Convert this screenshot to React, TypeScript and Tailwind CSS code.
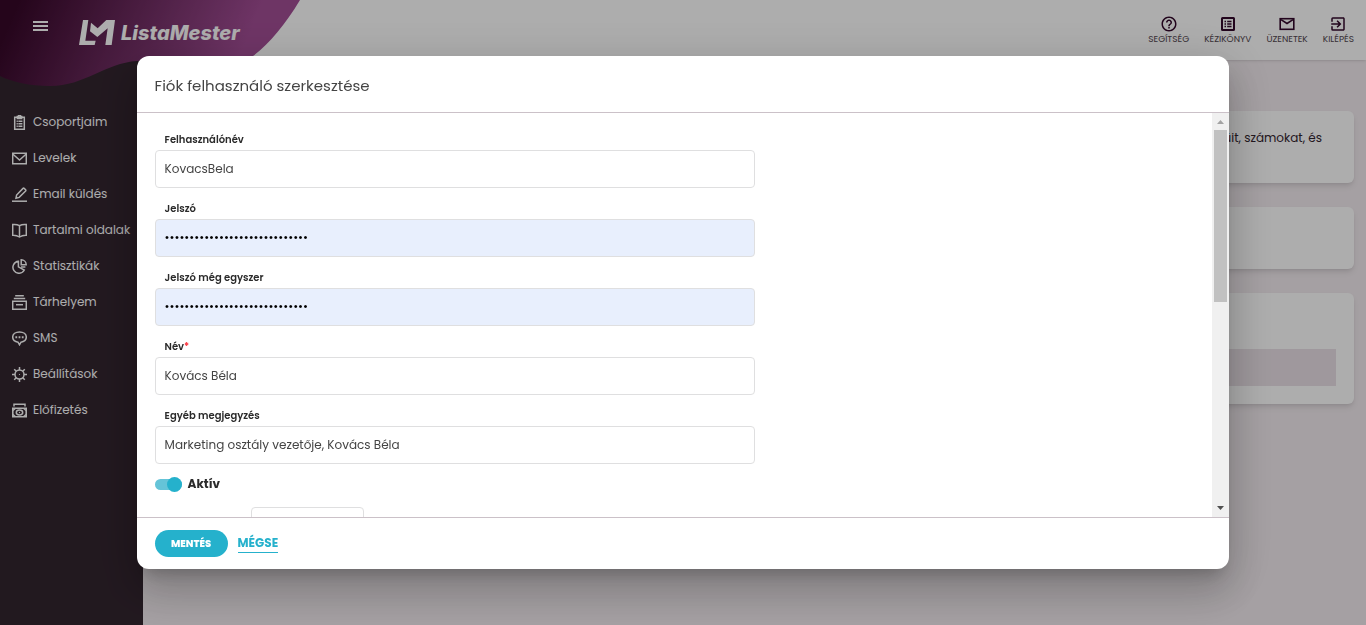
import { useState } from "react";
import type { ReactNode } from "react";
import { MdHelpOutline, MdOutlineExitToApp } from "react-icons/md";

export default function App() {
  return (
    <div className="relative flex min-h-screen flex-col bg-[#f3ecf0] font-['Poppins','Inter',sans-serif] text-[12px] text-[#33252f]">
      <Header />
      <div className="flex flex-1">
        <Sidebar />
        <PageCards />
      </div>
      <div className="fixed inset-0 z-20 flex items-center justify-center bg-black/32">
        <EditUserDialog />
      </div>
    </div>
  );
}

function HandbookIcon() {
  return (
    <svg width="18" height="18" viewBox="0 0 18 18" fill="none" stroke="currentColor" aria-hidden="true">
      <rect x="3" y="3" width="12" height="12" rx=".5" strokeWidth="2" />
      <path d="M5.500 6.500H7M5.500 9H7M5.500 11.500H7M8.200 6.500H12.500M8.200 9H12.500M8.200 11.500H12.500" strokeWidth="1.500" />
    </svg>
  );
}

function MessageIcon() {
  return (
    <svg width="18" height="18" viewBox="0 0 18 18" fill="none" stroke="currentColor" aria-hidden="true">
      <rect x="2.200" y="3.700" width="13.600" height="10.600" strokeWidth="1.600" />
      <path d="M3 4.600L9 8.500L15 4.600" strokeWidth="1.500" />
    </svg>
  );
}

const topLinks = [
  { label: "SEGÍTSÉG", icon: <MdHelpOutline size={18} /> },
  { label: "KÉZIKÖNYV", icon: <HandbookIcon /> },
  { label: "ÜZENETEK", icon: <MessageIcon /> },
  { label: "KILÉPÉS", icon: <MdOutlineExitToApp size={18} /> },
];

function Header() {
  return (
    <header className="relative z-10 flex h-[60px] items-center justify-between bg-white pr-3 shadow">
      {/* Purple wave behind the logo */}
      <svg className="absolute top-0 left-0" width="300" height="87" viewBox="0 0 300 87" aria-hidden="true">
        <defs>
          <linearGradient id="wave" gradientUnits="userSpaceOnUse" x1="20" y1="0" x2="225" y2="90">
            <stop offset="0" stopColor="#370829" />
            <stop offset="1" stopColor="#a34e96" />
          </linearGradient>
        </defs>
        <path
          d="M0 0H300C285 25 269 44 253 56C225 72 200 59 137 61C105 63 85 86 50 86C30 86 12 82 0 76Z"
          fill="url(#wave)"
        />
      </svg>

      <div className="relative flex items-center pl-[33px] text-white">
        <button type="button" aria-label="Menü" className="mr-[31px] mb-2 flex w-[15px] flex-col gap-0.5">
          <span className="h-0.5 bg-white" />
          <span className="h-0.5 bg-white" />
          <span className="h-0.5 bg-white" />
        </button>
        <a href="#" className="flex items-center gap-1.5 pt-1.5">
          <svg width="36" height="26" viewBox="0 0 108 78" fill="currentColor" aria-hidden="true">
            <path d="M12 0H28L19 62H50L47 75H0Z" />
            <path d="M36 8L56 25L82 0H108L98 75H79L86 25L55 51L33 34Z" />
          </svg>
          <span className="font-['Inter',sans-serif] text-[20px] leading-6 font-extrabold italic">ListaMester</span>
        </a>
      </div>

      <nav className="flex gap-[15px]">
        {topLinks.map((link) => (
          <a key={link.label} href="#" className="flex flex-col items-center text-[9px] leading-3 text-[#33082b]">
            {link.icon}
            <span className="text-[#54484f]">{link.label}</span>
          </a>
        ))}
      </nav>
    </header>
  );
}

function MenuIcon({ children }: { children: ReactNode }) {
  return (
    <svg
      width="15"
      height="15"
      viewBox="0 0 15 15"
      fill="none"
      stroke="currentColor"
      strokeWidth="1.500"
      className="shrink-0"
      aria-hidden="true"
    >
      {children}
    </svg>
  );
}

const menu = [
  {
    label: "Csoportjaim",
    icon: (
      <>
        <path d="M2.700 2.200H12.300V14.300H2.700Z" />
        <path d="M5.300 3.600V1.500H6.600V.6H8.400V1.500H9.700V3.600Z" />
        <path d="M4.600 6.300H10.400M4.600 8.800H10.400M4.600 11.300H10.400" strokeDasharray="1.2 .6 5" />
      </>
    ),
  },
  {
    label: "Levelek",
    icon: (
      <>
        <path d="M.7 2.200H14.300V12.800H.7Z" />
        <path d="M1 3.200L7.500 9L14 3.200" />
      </>
    ),
  },
  {
    label: "Email küldés",
    icon: (
      <>
        <path d="M0 14.200H15" />
        <path d="M4 11.200L4.600 8L11 1.400Q11.600.9 12.200 1.400L13.600 2.800Q14.100 3.400 13.600 4L7.200 10.400Z" />
      </>
    ),
  },
  {
    label: "Tartalmi oldalak",
    icon: (
      <>
        <path d="M7.500 2.600Q4.500 1 .7 1.500V12.200Q4.500 12 7.500 14Q10.500 12 14.300 12.200V1.500Q10.500 1 7.500 2.600Z" />
        <path d="M7.500 2.600V14" />
      </>
    ),
  },
  {
    label: "Statisztikák",
    icon: (
      <>
        <path d="M6.400 2.300A6 6 0 1 0 12.300 11L6.400 7.900Z" />
        <path d="M9.200.8V5.700H14.200A5 5 0 0 0 9.200.8Z" />
        <path d="M9 8H13.400" />
      </>
    ),
  },
  {
    label: "Tárhelyem",
    icon: (
      <>
        <path d="M3.200.8H11.800M1.800 3.400H13.200" />
        <path d="M.7 6.200H14.300V14.200H.7Z" />
        <path d="M4 9.700H11" />
      </>
    ),
  },
  {
    label: "SMS",
    icon: (
      <>
        <path d="M7.500.9C3.700.9.7 3 .7 6.100C.7 8.800 3 10.700 6 11.200L7.500 13.800L9 11.200C12 10.700 14.300 8.800 14.300 6.100C14.300 3 11.300.9 7.500.9Z" />
        <path d="M3.400 6.200H5.200M6.600 6.200H8.400M9.800 6.200H11.600" strokeWidth="1.900" />
      </>
    ),
  },
  {
    label: "Beállítások",
    icon: (
      <>
        <circle cx="7.500" cy="7.500" r="4.500" />
        <path d="M7.500 0V3M7.500 12V15M0 7.500H3M12 7.500H15M2.200 2.200L4.300 4.300M10.700 10.700L12.800 12.800M12.800 2.200L10.700 4.300M4.300 10.700L2.200 12.800" />
        <circle cx="7.500" cy="7.500" r=".6" fill="currentColor" stroke="none" />
      </>
    ),
  },
  {
    label: "Előfizetés",
    icon: (
      <>
        <path d="M2 3.600V1.200H13V3.600" />
        <path d="M.8 5.200H14.200V13.800H.8Z" strokeWidth="1.600" />
        <path d="M1 7.500L3.200 5.500M14 7.500L11.800 5.500M1 11.500L3.200 13.500M14 11.500L11.800 13.500" />
        <ellipse cx="7.500" cy="9.500" rx="3.200" ry="2.400" />
        <circle cx="7.500" cy="9.500" r=".7" fill="currentColor" stroke="none" />
      </>
    ),
  },
];

function Sidebar() {
  return (
    <nav className="w-[143px] shrink-0 bg-[#33252f] pt-11 text-white">
      {menu.map((item) => (
        <a key={item.label} href="#" className="flex h-9 items-center gap-1.5 pl-3 whitespace-nowrap">
          <MenuIcon>{item.icon}</MenuIcon>
          {item.label}
        </a>
      ))}
    </nav>
  );
}

function PageCards() {
  return (
    <main className="flex flex-1 flex-col gap-6 px-3 pt-[51px]">
      <section className="h-[72px] rounded-md bg-white px-8 pt-[17px] text-right leading-5 shadow-md">
        betűit, számokat, és
      </section>
      <section className="h-[62px] rounded-md bg-white shadow-md" />
      <section className="rounded-md bg-white px-[18px] pt-14 pb-[18px] shadow-md">
        <div className="h-[37px] bg-[#eae1e7]" />
      </section>
    </main>
  );
}

type FieldProps = {
  id: string;
  label: string;
  value: string;
  type?: string;
  required?: boolean;
};

function Field({ id, label, value, type = "text", required }: FieldProps) {
  return (
    <div className="mb-[11px] flex max-w-[600px] flex-col">
      <label htmlFor={id} className="px-2.5 text-[10px] leading-5 font-semibold">
        {label}
        {required && <span className="text-red-500">*</span>}
      </label>
      <input
        id={id}
        type={type}
        defaultValue={value}
        className={
          type === "password"
            ? "h-[38px] rounded border border-[#dfdfe0] bg-[#e8effd] px-[9px] text-black"
            : "h-[38px] rounded border border-[#dfdfe0] bg-white px-[9px] text-[#444444]"
        }
      />
    </div>
  );
}

function EditUserDialog() {
  const [active, setActive] = useState(true);

  return (
    <form
      role="dialog"
      aria-labelledby="dialog-title"
      className="flex h-[82vh] w-4/5 flex-col overflow-hidden rounded-xl bg-white text-[#2b2b2b] shadow-[0_11px_15px_-7px_rgba(0,0,0,0.2),0_24px_38px_3px_rgba(0,0,0,0.14),0_9px_46px_8px_rgba(0,0,0,0.12)]"
    >
      <h2 id="dialog-title" className="border-b border-[#cbc1c8] px-[18px] pt-[18px] pb-[14px] text-[15px] leading-6 text-[#444444]">
        Fiók felhasználó szerkesztése
      </h2>

      <div className="flex min-h-0 flex-1">
        <div className="min-w-0 flex-1 overflow-hidden px-[18px] pt-[17px]">
          <Field id="username" label="Felhasználónév" value="KovacsBela" />
          <Field id="password" label="Jelszó" type="password" value="abcdefghijklmnopqrstuvwxyz123" />
          <Field id="password-again" label="Jelszó még egyszer" type="password" value="abcdefghijklmnopqrstuvwxyz123" />
          <Field id="name" label="Név" value="Kovács Béla" required />
          <Field id="note" label="Egyéb megjegyzés" value="Marketing osztály vezetője, Kovács Béla" />

          <label className="flex h-[18px] items-center gap-1.5 font-bold">
            <span className="relative flex h-[15px] w-[27px] items-center">
              <input
                type="checkbox"
                checked={active}
                onChange={() => setActive(!active)}
                className="peer h-[11px] w-full appearance-none rounded-full bg-gray-300 checked:bg-[#65c4d8]"
              />
              <span className="pointer-events-none absolute left-0 size-[15px] rounded-full bg-gray-400 peer-checked:right-0 peer-checked:left-auto peer-checked:bg-[#25b1cc]" />
            </span>
            Aktív
          </label>

          <input aria-label="Érték" className="mt-[14px] ml-24 h-[38px] w-[113px] rounded border border-[#dfdfe0] px-[9px]" />
        </div>
        <Scrollbar />
      </div>

      <footer className="flex items-center gap-2.5 border-t border-[#cbc1c8] px-[18px] py-3">
        <button type="button" className="h-[27px] w-[73px] rounded-full bg-[#25b1cc] text-[10px] font-extrabold text-white">
          MENTÉS
        </button>
        <button type="button" className="border-b border-[#25b1cc] leading-[18px] font-bold text-[#25b1cc]">
          MÉGSE
        </button>
      </footer>
    </form>
  );
}

function Scrollbar() {
  return (
    <div className="flex w-[17px] flex-col items-center bg-[#f0f0f0]" aria-hidden="true">
      <svg width="17" height="17" viewBox="0 0 17 17" fill="#a3a3a3">
        <path d="M5 11H12L8.500 7Z" />
      </svg>
      <div className="h-[172px] w-[13px] bg-[#c1c1c1]" />
      <svg className="mt-auto" width="17" height="17" viewBox="0 0 17 17" fill="#505050">
        <path d="M5 6H12L8.500 10Z" />
      </svg>
    </div>
  );
}
